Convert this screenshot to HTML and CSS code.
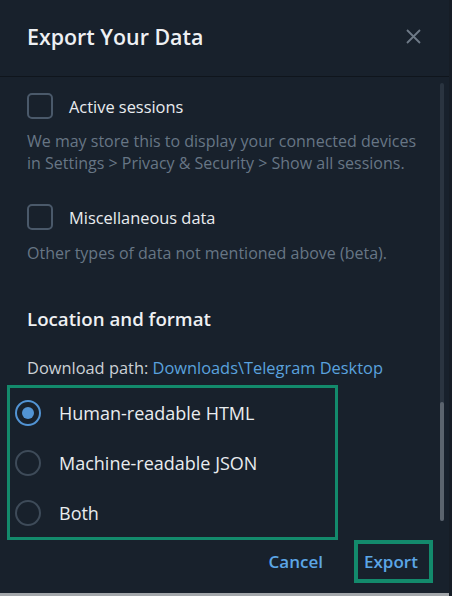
FILE: index.html
```html
<!DOCTYPE html>
<html>
<head>
<meta charset="utf-8">
<link rel="stylesheet" href="styles.css">
</head>
<body>
<div class="dialog">
  <div class="header">
    <div class="title">Export Your Data</div>
    <svg class="close" width="15" height="15" viewBox="0 0 15 15"><path d="M1 1 L14 14 M14 1 L1 14" stroke="#6e7a87" stroke-width="1.8" fill="none"/></svg>
  </div>
  <div class="divider"></div>
  <div class="scroll">
    <div class="content">
      <div class="check-row first">
        <span class="checkbox"></span>
        <span class="label">Active sessions</span>
      </div>
      <div class="desc">We may store this to display your connected devices in Settings &gt; Privacy &amp; Security &gt; Show all sessions.</div>
      <div class="check-row second">
        <span class="checkbox"></span>
        <span class="label">Miscellaneous data</span>
      </div>
      <div class="desc short">Other types of data not mentioned above (beta).</div>
      <div class="section">Location and format</div>
      <div class="path">Download path: <span class="link">Downloads\Telegram Desktop</span></div>
      <div class="radios">
        <div class="radio-row"><span class="radio on"></span><span class="rlabel">Human-readable HTML</span></div>
        <div class="radio-row"><span class="radio"></span><span class="rlabel">Machine-readable JSON</span></div>
        <div class="radio-row"><span class="radio"></span><span class="rlabel">Both</span></div>
      </div>
    </div>
    <div class="scrollbar"><div class="thumb"></div></div>
  </div>
  <div class="buttons">
    <span class="btn cancel">Cancel</span>
    <span class="btn export">Export</span>
  </div>
</div>
</body>
</html>
```
FILE: styles.css
```css
* { box-sizing: border-box; }
html, body { margin: 0; padding: 0; }
body {
  width: 452px;
  height: 596px;
  overflow: hidden;
  background: #161d26;
  font-family: "Open Sans", "Noto Sans", sans-serif;
}
.dialog {
  width: 449px;
  height: 596px;
  background: #18212c;
  border-bottom: 3px solid #a3a7ab;
  display: flex;
  flex-direction: column;
}
.header {
  height: 76px;
  flex: none;
  display: flex;
  align-items: center;
  justify-content: space-between;
  padding: 0 28px 0 27px;
}
.title {
  font-size: 21.4px;
  font-weight: 600;
  color: #eef0f3;
  margin-top: -3px;
}
.close { display: block; margin-top: -4px; }
.divider { height: 1px; background: #0f151c; flex: none; }
.scroll {
  display: flex;
  flex: none;
  height: 464px;
}
.content {
  flex: 1;
  padding-left: 27px;
}
.check-row {
  display: flex;
  align-items: center;
  gap: 16px;
  height: 26px;
}
.check-row.first { margin-top: 16px; }
.check-row.second { margin-top: 30px; }
.checkbox {
  width: 26px;
  height: 26px;
  border: 2px solid #4a596a;
  border-radius: 5px;
  flex: none;
}
.label {
  font-size: 16.4px;
  color: #e9ecef;
}
.desc {
  margin-top: 12px;
  font-size: 16px;
  line-height: 21.5px;
  color: #677685;
  width: 400px;
}
.desc.short { margin-top: 13px; }
.section {
  margin-top: 42px;
  font-size: 18.7px;
  line-height: 24px;
  font-weight: 600;
  color: #eef0f3;
}
.path {
  margin-top: 27px;
  font-size: 16.4px;
  line-height: 20px;
  color: #ccd1d6;
}
.link { color: #5aa2de; }
.radios {
  margin-top: 7px;
  margin-left: -20px;
  width: 331px;
  height: 155px;
  border: 3px solid #138a6c;
  padding-left: 5px;
  padding-top: 2px;
  display: flex;
  flex-direction: column;
  gap: 3px;
}
.radio-row {
  height: 48px;
  display: flex;
  align-items: center;
  gap: 18px;
}
.rlabel {
  font-size: 18px;
  color: #e9ecef;
}
.radio {
  width: 26px;
  height: 26px;
  border-radius: 50%;
  border: 2px solid #3e4b59;
  flex: none;
  display: flex;
  align-items: center;
  justify-content: center;
}
.radio.on { border-color: #5294d4; }
.radio.on::after {
  content: "";
  width: 12px;
  height: 12px;
  border-radius: 50%;
  background: #5294d4;
}
.scrollbar {
  width: 4px;
  margin: 6px 5px 0 0;
  height: 438px;
  background: #2a3440;
  border-radius: 2px;
  display: flex;
  flex-direction: column;
  justify-content: flex-end;
}
.thumb {
  height: 119px;
  background: #5b646e;
  border-radius: 2px;
}
.buttons {
  display: flex;
  justify-content: flex-end;
  align-items: center;
  gap: 31px;
  padding-right: 16px;
  margin-top: -1px;
}
.btn {
  font-size: 17px;
  font-weight: 600;
  color: #5ca6e6;
}
.export {
  height: 43px;
  width: 79px;
  border: 4px solid #138a6c;
  padding-left: 6px;
  display: flex;
  align-items: center;
}
```
